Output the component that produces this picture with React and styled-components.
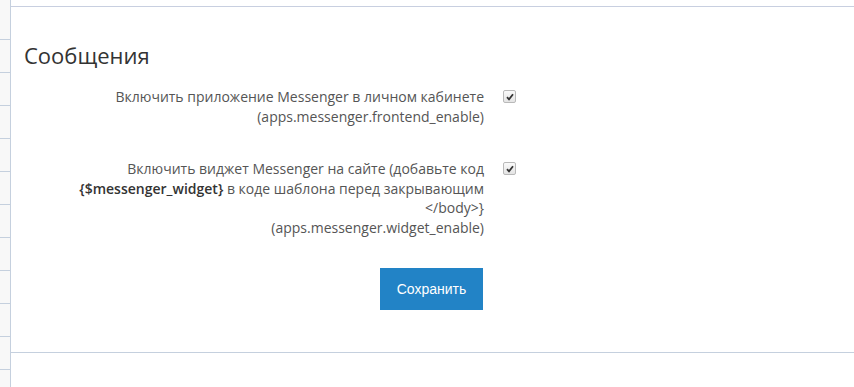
import React from 'react'
import styled, { createGlobalStyle } from 'styled-components'

const GlobalStyle = createGlobalStyle`
  html, body {
    margin: 0;
    padding: 0;
    background: #fff;
  }
  body {
    font-family: "Open Sans", "Liberation Sans", sans-serif;
    color: #555;
  }
`

const Page = styled.div`
  display: flex;
  width: 854px;
  height: 387px;
  overflow: hidden;
`

const Sidebar = styled.div`
  width: 10px;
  padding-top: 7px;
  background: #f8f8f8;
  border-right: 1px solid #c5d0de;
  flex-shrink: 0;
`

const SideItem = styled.div`
  height: 32px;
  border-bottom: 1px solid #c5d0de;
`

const Main = styled.div`
  flex: 1;
  padding-top: 6px;
`

const Panel = styled.div`
  height: 345px;
  border-top: 1px solid #c8cfe0;
  border-bottom: 1px solid #c5d0de;
  padding: 0 13px;
  box-sizing: content-box;
`

const Title = styled.h2`
  margin: 0;
  padding-top: 35px;
  font-size: 22px;
  font-weight: 400;
  line-height: 26px;
  color: #333;
`

const Form = styled.div`
  padding-top: 19px;
  display: flex;
  flex-direction: column;
  gap: 33px;
`

const Row = styled.div`
  display: grid;
  grid-template-columns: 420px 12px;
  column-gap: 19px;
  padding-left: 40px;
  align-items: start;
`

const Label = styled.div`
  text-align: right;
  font-size: 14px;
  line-height: 19.5px;
  color: #555;
`

const Code = styled.b`
  font-weight: 600;
  color: #333;
`

const Box = styled.span`
  width: 11px;
  height: 11px;
  margin-top: 3px;
  border: 1px solid #b9b9b9;
  border-radius: 2px;
  background: linear-gradient(#fafafa, #e4e4e4);
  display: flex;
  align-items: center;
  justify-content: center;
`

const Actions = styled.div`
  width: 419px;
  padding-left: 40px;
  display: flex;
  justify-content: flex-end;
  margin-top: -2px;
`

const SaveButton = styled.button`
  width: 103px;
  height: 42px;
  border: none;
  border-radius: 0;
  background: #2283c6;
  color: #fff;
  font-family: "Liberation Sans", Arial, sans-serif;
  font-size: 14px;
  cursor: pointer;
`

const settings = [
  {
    id: 'frontend',
    label: (
      <>
        Включить приложение Messenger в личном кабинете
        <br />
        (apps.messenger.frontend_enable)
      </>
    ),
  },
  {
    id: 'widget',
    label: (
      <>
        {'Включить виджет Messenger на сайте (добавьте код '}
        <Code>{'{$messenger_widget}'}</Code>
        {' в коде шаблона перед закрывающим </body>}'}
        <br />
        (apps.messenger.widget_enable)
      </>
    ),
  },
]

function CheckMark() {
  return (
    <Box>
      <svg width="8" height="8" viewBox="0 0 8 8">
        <path d="M1 4.2 L3 6.3 L7 1.2" fill="none" stroke="#333" strokeWidth="1.8" />
      </svg>
    </Box>
  )
}

export default function App() {
  return (
    <Page>
      <GlobalStyle />
      <Sidebar>
        {Array.from({ length: 12 }).map((_, i) => (
          <SideItem key={i} />
        ))}
      </Sidebar>
      <Main>
        <Panel>
          <Title>Сообщения</Title>
          <Form>
            {settings.map((s) => (
              <Row key={s.id}>
                <Label>{s.label}</Label>
                <CheckMark />
              </Row>
            ))}
            <Actions>
              <SaveButton>Сохранить</SaveButton>
            </Actions>
          </Form>
        </Panel>
      </Main>
    </Page>
  )
}
